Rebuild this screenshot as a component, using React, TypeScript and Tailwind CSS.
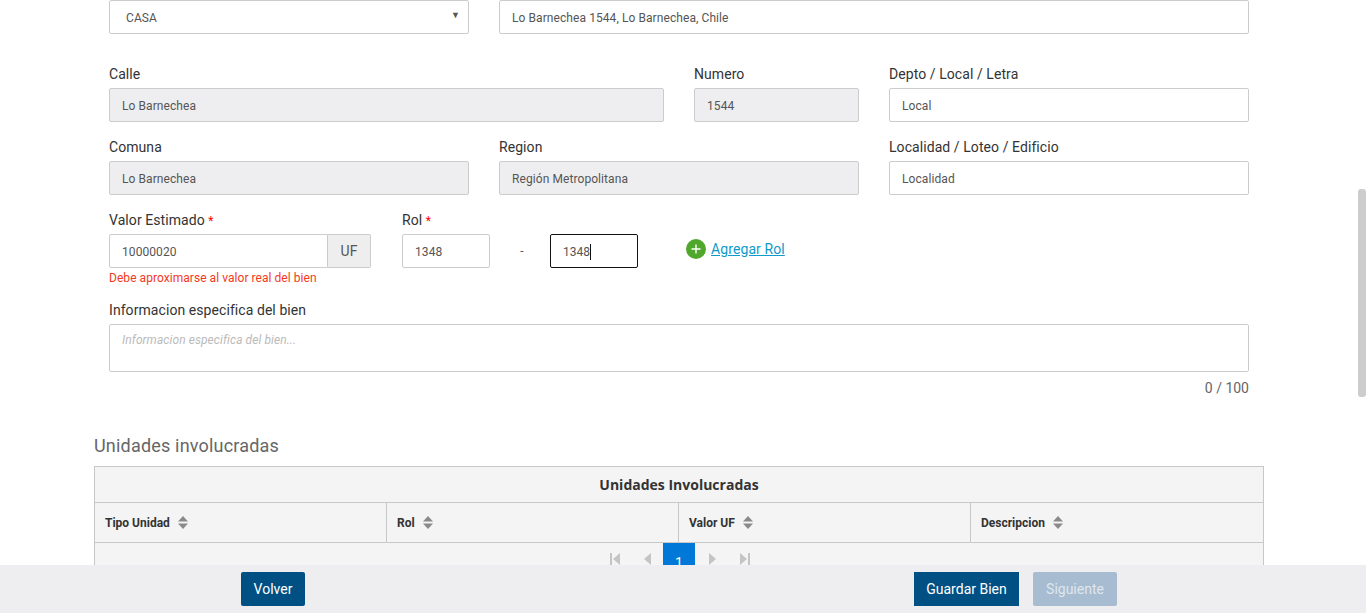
const inputBase = "flex items-center h-[34px] rounded-[2px] border border-[#ccc] px-3 pt-[2px] text-[12px] text-[#555] tracking-[0.08px]";
const labelBase = "h-[19px] mb-[4px] text-[14px] leading-[19px] text-[#333] tracking-[0.07px]";

function Field({ label, value, disabled, span }: { label: string; value: string; disabled?: boolean; span: string }) {
  return (
    <div className={span}>
      <div className={labelBase}>{label}</div>
      <div className={`${inputBase} ${disabled ? "bg-[#eeeef0]" : "bg-white"}`}>{value}</div>
    </div>
  );
}

function Sort() {
  return (
    <svg width="10" height="13" viewBox="0 0 10 13" className="ml-[8px]" fill="#8a8a8a">
      <path d="M5 0 L10 5.5 H0 Z" />
      <path d="M5 13 L10 7.5 H0 Z" />
    </svg>
  );
}

function Th({ label, className }: { label: string; className: string }) {
  return (
    <div className={`flex items-center pl-[10px] text-[12px] font-bold text-[#333] ${className}`}>
      {label}
      <Sort />
    </div>
  );
}

export default function App() {
  return (
    <div className="relative h-[613px] w-full overflow-hidden bg-white font-['Roboto',sans-serif]">
      <div className="w-[1170px] ml-[94px]">
        <div className="px-[15px]">
          <div className="grid grid-cols-12 gap-x-[30px]">
            <div className={`col-span-4 ${inputBase} bg-white pl-4 justify-between pr-2 relative`}>
              <span>CASA</span>
              <span className="text-[9px] text-[#555] -mt-1">▼</span>
            </div>
            <div className={`col-span-8 ${inputBase} bg-white`}>Lo Barnechea 1544, Lo Barnechea, Chile</div>
          </div>

          <div className="grid grid-cols-12 gap-x-[30px] gap-y-[16px] mt-[31px]">
            <Field span="col-span-6" label="Calle" value="Lo Barnechea" disabled />
            <Field span="col-span-2" label="Numero" value="1544" disabled />
            <Field span="col-span-4" label="Depto / Local / Letra" value="Local" />
            <Field span="col-span-4" label="Comuna" value="Lo Barnechea" disabled />
            <Field span="col-span-4" label="Region" value="Región Metropolitana" disabled />
            <Field span="col-span-4" label="Localidad / Loteo / Edificio" value="Localidad" />
          </div>

          <div className="flex mt-[16px] h-[75px]">
            <div className="w-[262px]">
              <div className={labelBase}>
                Valor Estimado <span className="text-[#f00] text-[12px]">*</span>
              </div>
              <div className="flex h-[34px]">
                <div className="flex-1 flex items-center pl-3 pt-[2px] text-[12px] text-[#555] tracking-[0.08px] border border-[#ccc] rounded-l-[2px]">10000020</div>
                <div className="w-[43px] flex items-center justify-center bg-[#eee] border border-l-0 border-[#ccc] rounded-r-[2px] text-[14px] text-[#555]">UF</div>
              </div>
              <div className="text-[12px] leading-[14px] mt-[3px] text-[#f5391c] tracking-[0.05px]">Debe aproximarse al valor real del bien</div>
            </div>
            <div className="ml-[31px]">
              <div className={labelBase}>
                Rol <span className="text-[#f00] text-[12px]">*</span>
              </div>
              <div className="flex items-center">
                <div className={`${inputBase} w-[88px] bg-white`}>1348</div>
                <div className="w-[60px] pl-[4px] text-center text-[12px] text-[#555]">-</div>
                <div className="flex items-center h-[34px] w-[88px] rounded-[2px] border border-[#111] pl-3 pt-[2px] text-[12px] text-[#555]">
                  1348<span className="w-px h-[16px] bg-[#111]" />
                </div>
                <div className="ml-[48px] flex items-center -mt-[4px]">
                  <svg width="20" height="20" viewBox="0 0 20 20">
                    <circle cx="10" cy="10" r="10" fill="#4fa82c" />
                    <path d="M10 5.5V14.5M5.5 10H14.5" stroke="#fff" strokeWidth="1.4" />
                  </svg>
                  <span className="ml-[5px] text-[14px] text-[#0f9bc9] underline tracking-[0.1px]">Agregar Rol</span>
                </div>
              </div>
            </div>
          </div>

          <div className={`mt-[15px] ${labelBase}`}>Informacion especifica del bien</div>
          <div className="h-[48px] rounded-[2px] border border-[#ccc] px-3 pt-[7px] text-[12px] leading-[16px] italic text-[#bbb] tracking-[0.08px]">
            Informacion especifica del bien...
          </div>
          <div className="mt-[7px] text-right text-[14px] leading-[18px] text-[#666]">0 / 100</div>
        </div>

        <h2 className="mt-[37px] text-[18px] leading-[24px] font-normal text-[#666] tracking-[0.19px]">Unidades involucradas</h2>

        <div className="mt-[8px] border border-[#c8c8c8] bg-[#f4f4f4]">
          <div className="h-[36px] flex items-center justify-center font-['Open_Sans',sans-serif] text-[14px] font-bold text-[#333] border-b border-[#c8c8c8]">
            Unidades Involucradas
          </div>
          <div className="flex h-[40px] border-b border-[#c8c8c8]">
            <Th label="Tipo Unidad" className="w-[291px]" />
            <Th label="Rol" className="w-[292px] border-l border-[#c8c8c8]" />
            <Th label="Valor UF" className="w-[292px] border-l border-[#c8c8c8]" />
            <Th label="Descripcion" className="flex-1 border-l border-[#c8c8c8]" />
          </div>
          <div className="flex items-center justify-center h-[40px] pl-[2px] text-[#c4c4c4]">
            <svg width="10" height="12" viewBox="0 0 10 12" fill="#c4c4c4" className="mb-[8px]"><path d="M0 0H2V12H0ZM10 0V12L3 6Z" /></svg>
            <svg width="8" height="12" viewBox="0 0 8 12" fill="#c4c4c4" className="ml-[23px] mb-[8px]"><path d="M8 0V12L1 6Z" /></svg>
            <div className="ml-[12px] w-[32px] h-[40px] bg-[#0078d7] text-white text-[14px] flex items-center justify-center">1</div>
            <svg width="8" height="12" viewBox="0 0 8 12" fill="#c4c4c4" className="ml-[14px] mb-[8px]"><path d="M0 0V12L7 6Z" /></svg>
            <svg width="10" height="12" viewBox="0 0 10 12" fill="#c4c4c4" className="ml-[23px] mb-[8px]"><path d="M0 0V12L7 6ZM8 0H10V12H8Z" /></svg>
          </div>
        </div>
      </div>

      <div className="absolute left-0 right-0 bottom-0 h-[48px] bg-[#eeeef0] flex items-center pl-[241px] pr-[249px]">
        <div className="h-[34px] w-[64px] flex items-center justify-center rounded-[2px] bg-[#015084] text-white text-[14px]">Volver</div>
        <div className="ml-auto h-[34px] w-[105px] flex items-center justify-center bg-[#015084] text-white text-[14px]">Guardar Bien</div>
        <div className="ml-[14px] h-[34px] w-[84px] flex items-center justify-center rounded-[2px] bg-[#a7bcd0] text-[#dfe6ee] text-[14px]">Siguiente</div>
      </div>

      <div className="absolute right-0 top-[189px] w-[8px] h-[208px] rounded-[3px] bg-[#cdcdcd]" />
    </div>
  );
}
